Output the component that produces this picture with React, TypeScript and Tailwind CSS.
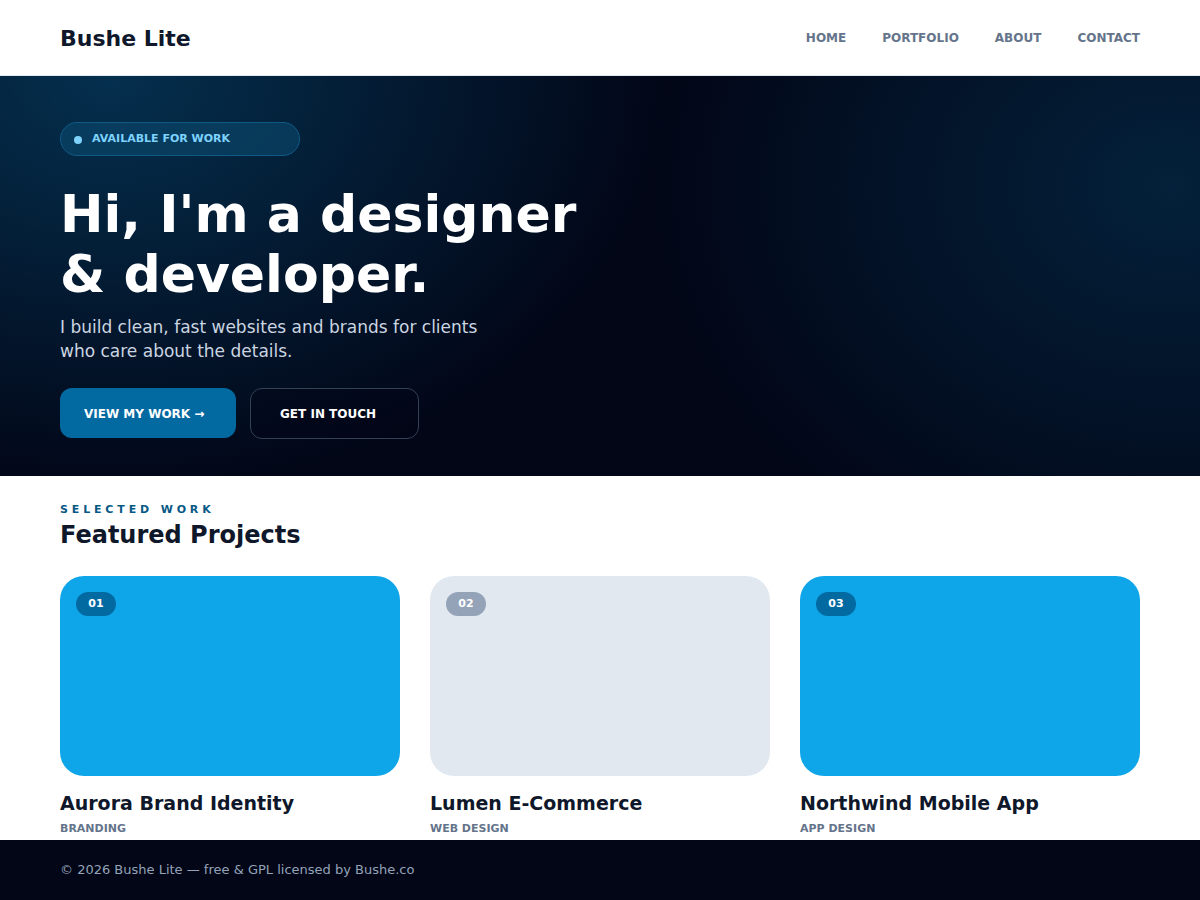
import React from 'react';

const projects = [
  { num: '01', title: 'Aurora Brand Identity', tag: 'BRANDING', card: 'bg-[#0ea5e9]', badge: 'bg-[#0369a1]' },
  { num: '02', title: 'Lumen E-Commerce', tag: 'WEB DESIGN', card: 'bg-[#e2e8f0]', badge: 'bg-[#94a3b8]' },
  { num: '03', title: 'Northwind Mobile App', tag: 'APP DESIGN', card: 'bg-[#0ea5e9]', badge: 'bg-[#0369a1]' },
];

const App = () => {
  return (
    <div className="w-[1200px] h-[900px] overflow-hidden bg-white font-['DejaVu_Sans',sans-serif]">
      <header className="h-[76px] px-[60px] pt-[1px] flex items-center justify-between border-b border-[#e2e8f0]">
        <div className="text-[22px] font-bold text-[#0f172a]">Bushe Lite</div>
        <nav className="flex items-center gap-[36px] text-[12px] font-bold text-[#64748b]">
          <a>HOME</a>
          <a>PORTFOLIO</a>
          <a>ABOUT</a>
          <a>CONTACT</a>
        </nav>
      </header>

      <section className="h-[400px] px-[60px] pt-[46px] bg-[#020617] bg-[radial-gradient(ellipse_560px_420px_at_110px_0px,rgba(7,89,133,0.5),transparent),radial-gradient(ellipse_520px_420px_at_1170px_110px,rgba(7,89,133,0.32),transparent)]">
        <div className="flex items-center h-[34px] w-[240px] px-[13px] pt-[1px] gap-[10px] rounded-full border border-[#0e5a86] bg-[#0c4a6e]/60">
          <span className="w-[8px] h-[8px] rounded-full bg-[#7dd3fc]" />
          <span className="text-[11px] font-bold text-[#7dd3fc]">AVAILABLE FOR WORK</span>
        </div>
        <h1 className="mt-[28px] text-[52px] leading-[60px] font-bold text-white">
          Hi, I'm a designer
          <br />& developer.
        </h1>
        <p className="mt-[11px] w-[440px] text-[17px] leading-[24px] text-[#cbd5e1]">
          I build clean, fast websites and brands for clients who care about the details.
        </p>
        <div className="mt-[25px] flex gap-[14px]">
          <button className="h-[50px] w-[176px] pl-[24px] pt-[2px] text-left rounded-[12px] bg-[#0369a1] text-white text-[12px] font-bold">
            VIEW MY WORK →
          </button>
          <button className="h-[51px] w-[169px] pl-[29px] pt-[1px] text-left rounded-[12px] border border-[#334155] bg-[#020617]/40 text-white text-[12px] font-bold">
            GET IN TOUCH
          </button>
        </div>
      </section>

      <section className="h-[364px] px-[60px] pt-[26px]">
        <div className="text-[11px] leading-[16px] font-bold tracking-[0.35em] text-[#075985]">SELECTED WORK</div>
        <h2 className="mt-[2px] text-[24px] leading-[30px] font-bold text-[#0f172a]">Featured Projects</h2>
        <div className="mt-[26px] grid grid-cols-3 gap-[30px]">
          {projects.map((p) => (
            <div key={p.num}>
              <div className={`h-[200px] rounded-[24px] p-[16px] ${p.card}`}>
                <span className={`flex items-center justify-center w-[40px] h-[24px] pt-[1px] rounded-full text-[11px] font-bold text-white ${p.badge}`}>
                  {p.num}
                </span>
              </div>
              <h3 className="mt-[14px] text-[19px] leading-[26px] font-bold text-[#0f172a]">{p.title}</h3>
              <div className="mt-[6px] text-[11px] leading-[14px] font-bold text-[#64748b]">{p.tag}</div>
            </div>
          ))}
        </div>
      </section>

      <footer className="h-[60px] px-[60px] flex items-center bg-[#020617] text-[13px] text-[#94a3b8]">
        © 2026 Bushe Lite — free &amp; GPL licensed by Bushe.co
      </footer>
    </div>
  );
};

export default App;
